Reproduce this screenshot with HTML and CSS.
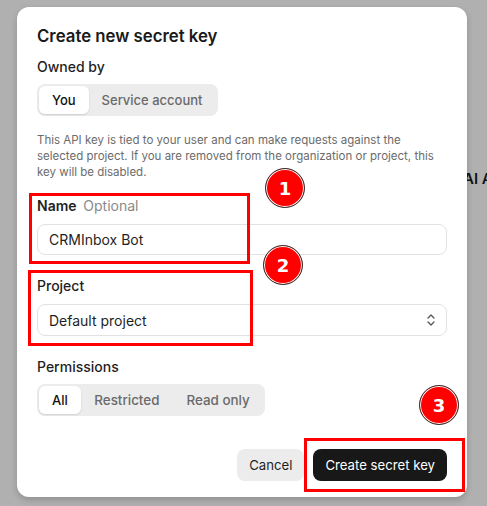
FILE: index.html
```html
<!DOCTYPE html>
<html>
<head>
<meta charset="utf-8">
<link rel="stylesheet" href="styles.css">
</head>
<body>
<div class="bg-text">AI A</div>
<div class="modal">
  <h1 class="title">Create new secret key</h1>
  <div class="label mt9">Owned by</div>
  <div class="seg mt7">
    <span class="seg-item active">You</span>
    <span class="seg-item">Service account</span>
  </div>
  <p class="desc">This API key is tied to your user and can make requests against the selected project. If you are removed from the organization or project, this key will be disabled.</p>
  <div class="label mt16"><b>Name</b> <span class="opt">Optional</span></div>
  <div class="field mt8 h31">CRMInbox Bot</div>
  <div class="label mt21">Project</div>
  <div class="field select mt8">
    <span>Default project</span>
    <svg class="chev" width="10" height="14" viewBox="0 0 10 14"><path d="M2 5 L5 2 L8 5 M2 9 L5 12 L8 9" fill="none" stroke="#555" stroke-width="1.3" stroke-linecap="round" stroke-linejoin="round"/></svg>
  </div>
  <div class="label mt21">Permissions</div>
  <div class="seg mt7">
    <span class="seg-item active">All</span>
    <span class="seg-item wide">Restricted</span>
    <span class="seg-item wide">Read only</span>
  </div>
  <div class="actions">
    <button class="btn cancel">Cancel</button>
    <button class="btn primary">Create secret key</button>
  </div>
</div>
<div class="redbox rb1"></div>
<div class="redbox rb2"></div>
<div class="redbox rb3"></div>
<div class="badge b1">1</div>
<div class="badge b2">2</div>
<div class="badge b3">3</div>
</body>
</html>
```
FILE: styles.css
```css
html, body { margin: 0; padding: 0; }
body {
  background: #b0b0b0;
  width: 487px;
  height: 506px;
  overflow: hidden;
  position: relative;
  font-family: Inter, "Liberation Sans", sans-serif;
  color: #1f1f1f;
}
.bg-text {
  position: absolute;
  left: 463px;
  top: 169px;
  font-size: 15px;
  font-weight: 600;
  color: #111;
  white-space: nowrap;
}
.modal {
  position: relative;
  margin: 7px 0 0 17px;
  width: 450px;
  height: 490px;
  box-sizing: border-box;
  padding: 17px 20px 16px 20px;
  background: #fff;
  border-radius: 12px;
  box-shadow: 0 3px 6px rgba(0,0,0,0.18);
  display: flex;
  flex-direction: column;
}
.title {
  margin: 0;
  font-size: 16.8px;
  line-height: 24px;
  font-weight: 600;
  color: #1a1a1a;
}
.label {
  font-size: 14px;
  line-height: 20px;
  font-weight: 500;
  color: #1f1f1f;
}
.label b { font-weight: 600; }
.opt { color: #8a8a8a; font-weight: 400; margin-left: 3px; }
.mt7 { margin-top: 7px; }
.mt8 { margin-top: 8px; }
.mt9 { margin-top: 9px; }
.mt16 { margin-top: 16px; }
.mt21 { margin-top: 21px; }
.seg {
  align-self: flex-start;
  display: flex;
  background: #ececec;
  border-radius: 8px;
  padding: 2px;
  height: 32px;
  box-sizing: border-box;
}
.seg-item {
  display: flex;
  align-items: center;
  padding: 0 13px;
  font-size: 13px;
  font-weight: 500;
  color: #6a6a6a;
  border-radius: 6px;
}
.seg-item.wide { font-size: 13.4px; padding: 0 13.5px; }
.seg-item.active {
  background: #fff;
  color: #111;
  box-shadow: 0 1px 2px rgba(0,0,0,0.12);
}
.desc {
  margin: 16px 0 0 0;
  font-size: 11.5px;
  line-height: 16px;
  color: #6b6b6b;
}
.field {
  height: 32px;
  box-sizing: border-box;
  border: 1px solid #e2e2e2;
  border-radius: 8px;
  padding: 0 11px;
  display: flex;
  align-items: center;
  font-size: 14px;
  color: #1f1f1f;
}
.h31 { height: 31px; }
.select { justify-content: space-between; padding-right: 10px; }
.chev { display: block; }
.actions {
  margin-top: auto;
  display: flex;
  justify-content: flex-end;
  gap: 9px;
}
.btn {
  height: 32px;
  border: none;
  border-radius: 8px;
  font-family: inherit;
  font-size: 13.2px;
  padding: 0 12px;
}
.cancel { background: #ececec; color: #1f1f1f; }
.primary { background: #181818; color: #fff; }
.redbox {
  position: absolute;
  border: 3px solid #ff0000;
  box-sizing: border-box;
}
.rb1 { left: 29px; top: 193px; width: 221px; height: 71px; }
.rb2 { left: 28px; top: 270px; width: 225px; height: 76px; }
.rb3 { left: 304px; top: 438px; width: 161px; height: 54px; }
.badge {
  position: absolute;
  width: 40px;
  height: 40px;
  box-sizing: border-box;
  border-radius: 50%;
  background: #ff0000;
  border: 1.5px solid #333;
  box-shadow: inset 0 0 0 1px #fff;
  color: #fff;
  font-family: "DejaVu Sans", sans-serif;
  font-weight: 700;
  font-size: 18px;
  display: flex;
  align-items: center;
  justify-content: center;
}
.b1 { left: 265px; top: 168px; }
.b2 { left: 263px; top: 245px; }
.b3 { left: 419px; top: 385px; }
```
